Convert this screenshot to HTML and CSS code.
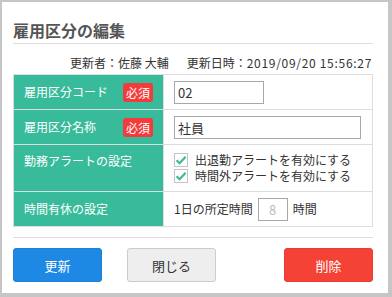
FILE: index.html
```html
<!DOCTYPE html>
<html lang="ja">
<head>
  <meta charset="UTF-8">
  <title>雇用区分の編集</title>
  <link rel="stylesheet" href="styles.css">
</head>
<body>
  <div class="dialog">
    <h1>雇用区分の編集</h1>
    <div class="meta">更新者：佐藤 大輔<span class="meta-gap"></span>更新日時：<span class="meta-date">2019/09/20 15:56:27</span></div>

    <table class="form-table">
      <tr>
        <th><div class="th-inner"><span>雇用区分コード</span><span class="required">必須</span></div></th>
        <td><input type="text" class="input-code" value="02"></td>
      </tr>
      <tr>
        <th><div class="th-inner"><span>雇用区分名称</span><span class="required">必須</span></div></th>
        <td><input type="text" class="input-name" value="社員"></td>
      </tr>
      <tr class="row-alert">
        <th class="th-top">勤務アラートの設定</th>
        <td>
          <label class="check"><span class="check-box"><svg width="12" height="12" viewBox="0 0 12 12"><path d="M1.5 6.2 L4.6 9.2 L10.6 2.8" fill="none" stroke="#3dbb98" stroke-width="2.2"/></svg></span>出退勤アラートを有効にする</label>
          <label class="check"><span class="check-box"><svg width="12" height="12" viewBox="0 0 12 12"><path d="M1.5 6.2 L4.6 9.2 L10.6 2.8" fill="none" stroke="#3dbb98" stroke-width="2.2"/></svg></span>時間外アラートを有効にする</label>
        </td>
      </tr>
      <tr>
        <th>時間有休の設定</th>
        <td><span class="hours">1日の所定時間<input type="text" class="input-hours" value="8">時間</span></td>
      </tr>
    </table>

    <div class="footer">
      <button class="btn btn-blue">更新</button>
      <button class="btn btn-gray">閉じる</button>
      <button class="btn btn-red">削除</button>
    </div>
  </div>
</body>
</html>
```

FILE: styles.css
```css
body {
  margin: 0;
  padding: 2px 4px 4px 2px;
  background-color: #c6c6c6;
  font-family: "Noto Sans CJK JP", "Noto Sans", sans-serif;
  color: #333;
}

.dialog {
  background: white;
  height: 291px;
  padding: 0 15px 0 11px;
  box-sizing: border-box;
  overflow: hidden;
}

h1 {
  margin: 0;
  padding-top: 16px;
  padding-bottom: 1px;
  font-size: 16px;
  line-height: 24px;
  font-weight: bold;
  color: #555;
  border-bottom: 1px solid #ddd;
}

.meta {
  margin-top: 10px;
  margin-bottom: 2px;
  font-size: 12px;
  line-height: 18px;
  text-align: right;
  padding-right: 1px;
  color: #333;
}

.meta-gap {
  display: inline-block;
  width: 18px;
}

.meta-date {
  letter-spacing: 0.7px;
}

.form-table {
  width: 100%;
  border-collapse: collapse;
  border: 1px solid #ddd;
  font-size: 12px;
  table-layout: fixed;
}

.form-table th,
.form-table td {
  border: 1px solid #ddd;
  height: 35px;
  padding: 0 10px;
  box-sizing: border-box;
  white-space: nowrap;
  line-height: 16px;
}

.form-table th {
  width: 150px;
  background-color: #37bb9a;
  color: white;
  font-weight: normal;
  text-align: left;
}

.th-inner {
  display: flex;
  justify-content: space-between;
  align-items: center;
}

.required {
  background-color: #f43b3b;
  color: white;
  font-size: 12px;
  line-height: 19px;
  padding: 0 3px;
  border-radius: 3px;
}

.form-table input {
  display: block;
  font-family: inherit;
  font-size: 13px;
  color: #333;
  border: 1px solid #a8a8a8;
  padding: 0 3px;
  box-sizing: border-box;
  height: 23px;
  margin: 0;
  outline: none;
}

.input-code {
  width: 90px;
}

.form-table .input-name {
  width: 187px;
}

.row-alert th,
.row-alert td {
  height: 47px;
}

.row-alert th.th-top {
  vertical-align: top;
  padding-top: 8px;
}

.check {
  display: flex;
  align-items: center;
  line-height: 16px;
}

.check-box {
  width: 14px;
  height: 14px;
  border: 1px solid #c4c4c4;
  box-sizing: border-box;
  display: flex;
  align-items: center;
  justify-content: center;
  margin-right: 7px;
}

.hours {
  display: flex;
  align-items: center;
}

.form-table .input-hours {
  width: 30px;
  margin: 0 5px;
  text-align: center;
  color: #bbb;
}

.footer {
  margin-top: 10px;
  border-top: 1px solid #ddd;
  padding-top: 10px;
  display: flex;
}

.btn {
  width: 89px;
  height: 34px;
  border-radius: 3px;
  font-family: inherit;
  font-size: 13px;
  border: 1px solid transparent;
  cursor: pointer;
}

.btn-blue {
  background-color: #1e88e5;
  color: white;
  border-color: #1e80d8;
}

.btn-gray {
  margin-left: 25px;
  background-color: #eeeeee;
  color: #333;
  border-color: #cccccc;
}

.btn-red {
  margin-left: auto;
  background-color: #f44336;
  color: white;
  border-color: #ec3b2e;
}
```
